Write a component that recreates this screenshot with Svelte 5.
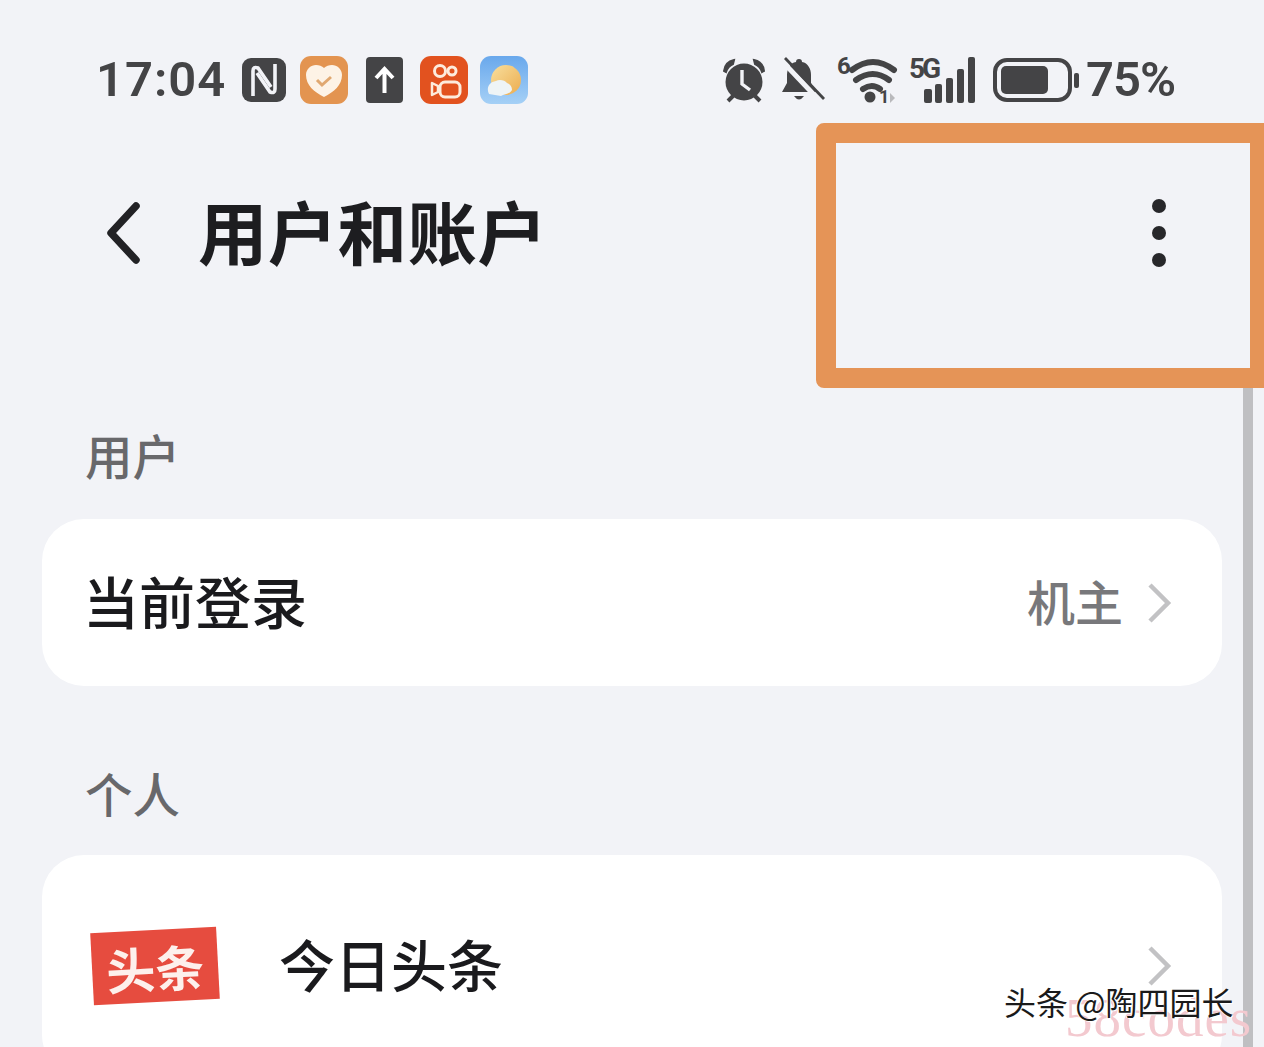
<script>
  const sections = [
    { label: '用户', rows: [{ name: '当前登录', value: '机主' }] },
    { label: '个人', rows: [{ name: '今日头条', logo: true }] }
  ];
</script>

<div class="page">
  <div class="status">
    <div class="status-left">
      <span class="time">17:04</span>
      <svg class="i-n" viewBox="0 0 44 44"><rect width="44" height="44" rx="9" fill="#444446"/><path d="M11 38V13q0-5 5-3l13 19" fill="none" stroke="#f2f3f7" stroke-width="3.600"/><path d="M33 6v25q0 5-5 3L15 15" fill="none" stroke="#f2f3f7" stroke-width="3.600"/></svg>
      <svg class="i-heart" viewBox="0 0 48 48"><rect width="48" height="48" rx="11" fill="#e39450"/><path d="M24 41C14 36 6 29 6 19c0-6 5-10 10-10 3 0 6 1 8 3 2-2 5-3 8-3 5 0 10 4 10 10 0 10-8 17-18 22z" fill="#fdf3e6"/><path d="M17 24l5 5 9-8" fill="none" stroke="#e0a870" stroke-width="3"/></svg>
      <svg class="i-up" viewBox="0 0 37 46"><rect width="37" height="46" rx="4" fill="#444446"/><path d="M18.500 36V13M10 21l8.500-9 8.500 9" fill="none" stroke="#fff" stroke-width="4"/></svg>
      <svg class="i-ks" viewBox="0 0 48 48"><rect width="48" height="48" rx="11" fill="#e2521f"/><circle cx="20" cy="15" r="5.500" fill="none" stroke="#fdebdc" stroke-width="3"/><circle cx="32" cy="15" r="4" fill="none" stroke="#fdebdc" stroke-width="3"/><rect x="20" y="26" width="20" height="15" rx="5" fill="none" stroke="#fdebdc" stroke-width="3"/><path d="M18 30l-6-3v12l6-3z" fill="none" stroke="#fdebdc" stroke-width="2.500" stroke-linejoin="round"/></svg>
      <svg class="i-weather" viewBox="0 0 48 48"><defs><linearGradient id="sky" x1="0" y1="0" x2="0" y2="1"><stop offset="0" stop-color="#69a8ec"/><stop offset="1" stop-color="#a5d0f6"/></linearGradient><linearGradient id="sun" x1="0" y1="0" x2="1" y2="1"><stop offset="0" stop-color="#f8df9e"/><stop offset="1" stop-color="#ecac4e"/></linearGradient></defs><rect width="48" height="48" rx="11" fill="url(#sky)"/><circle cx="26" cy="24" r="15" fill="url(#sun)"/><path d="M9 38c-3-6 0-12 7-13 3-2 9-1 11 2 3 1 5 3 5 7-3 5-8 4-11 6z" fill="#eef4f6"/></svg>
    </div>
    <div class="status-right">
      <svg class="i-alarm" viewBox="0 0 44 44"><circle cx="22" cy="24" r="18.500" fill="#444446"/><path d="M2 13q1-9 10-11l-1 4q-5 2-7 8zM42 13q-1-9-10-11l1 4q5 2 7 8z" fill="#444446" stroke="#444446" stroke-width="2"/><path d="M6 43l5-5M38 43l-5-5" stroke="#444446" stroke-width="4"/><path d="M20 12v14l8 6" fill="none" stroke="#f2f3f7" stroke-width="3.400"/></svg>
      <svg class="i-bell" viewBox="0 0 42 44"><path d="M17 1c2 0 3 1 3 3 6 1 9 7 9 13v8l5 9H0l5-9v-8c0-6 3-12 9-13 0-2 1-3 3-3z" fill="#444446"/><path d="M12 38h10q-5 7-10 0z" fill="#444446"/><path d="M0 3l36 38" stroke="#f2f3f7" stroke-width="5"/><path d="M3 0l39 41" stroke="#444446" stroke-width="2.800"/></svg>
      <svg class="i-wifi" viewBox="0 0 60 48"><text x="0" y="18" class="mini six">6</text><path d="M15 14q21-16 42 0M19 24q17-12 33 0M26 33q9-6 17 0" fill="none" stroke="#444446" stroke-width="6" stroke-linecap="round"/><circle cx="33" cy="41" r="5.500" fill="#444446"/><text x="42" y="47" class="mini tiny">1</text><path d="M53 37l5 5-5 5z" fill="#b9b9bc"/></svg>
      <svg class="i-5g" viewBox="0 0 66 46"><text x="0" y="21" class="mini g">5G</text><g fill="#444446"><rect x="15" y="32" width="8" height="14" rx="2"/><rect x="26" y="27" width="7" height="19" rx="2"/><rect x="37" y="21" width="7" height="25" rx="2"/><rect x="48" y="12" width="7" height="34" rx="2"/><rect x="59" y="0" width="7" height="46" rx="2"/></g></svg>
      <svg class="i-batt" viewBox="0 0 86 44"><rect x="2" y="2" width="75" height="40" rx="12" fill="none" stroke="#444446" stroke-width="4"/><rect x="8" y="8" width="47" height="28" rx="5" fill="#444446"/><rect x="81" y="15" width="5" height="15" rx="2" fill="#444446"/></svg>
      <span class="pct">75%</span>
    </div>
  </div>

  <div class="header">
    <svg class="back" viewBox="0 0 36 62"><path d="M31 4L6 31l25 27" fill="none" stroke="#222225" stroke-width="7.500" stroke-linecap="round" stroke-linejoin="round"/></svg>
    <h1>用户和账户</h1>
  </div>

  {#each sections as section}
    <div class="label">{section.label}</div>
    <div class="card">
      {#each section.rows as row}
        <div class="row" class:tall={row.logo}>
          {#if row.logo}
            <div class="logo"><span>头条</span></div>
          {/if}
          <span class="name">{row.name}</span>
          {#if row.value}<span class="value">{row.value}</span>{/if}
          <svg class="chev" viewBox="0 0 24 42"><path d="M3 3l18 18L3 39" fill="none" stroke="#c2c2c4" stroke-width="4.500"/></svg>
        </div>
      {/each}
    </div>
  {/each}

  <div class="scrollbar"></div>

  <div class="highlight"></div>
  <div class="more"><i></i><i></i><i></i></div>
  <div class="wm-site">58codes</div>
  <div class="wm-author">头条 @陶四园长</div>
</div>

<style>
  :global(body) { margin: 0; background: #f2f3f7; }
  .page {
    position: relative;
    width: 1264px;
    height: 1047px;
    overflow: hidden;
    background: #f2f3f7;
    font-family: "Noto Sans CJK SC", "Noto Sans", sans-serif;
  }
  svg { display: block; flex: none; overflow: visible; }
  .status {
    display: flex;
    justify-content: space-between;
    align-items: center;
    height: 48px;
    padding: 56px 90px 0 96px;
  }
  .status-left, .status-right { display: flex; align-items: center; }
  .time, .pct {
    font-family: Roboto, "Liberation Sans", sans-serif;
    font-weight: 600;
    color: #444446;
    line-height: 48px;
  }
  .time { font-size: 49px; letter-spacing: 1px; width: 146px; }
  .pct { font-size: 49px; margin-left: 7px; letter-spacing: -1px; width: 88px; white-space: nowrap; }
  .i-n { width: 44px; height: 44px; }
  .i-heart { width: 48px; height: 48px; margin-left: 14px; }
  .i-up { width: 37px; height: 46px; margin-left: 18px; }
  .i-ks { width: 48px; height: 48px; margin-left: 17px; }
  .i-weather { width: 48px; height: 48px; margin-left: 12px; }
  .i-alarm { width: 44px; height: 44px; }
  .i-bell { width: 42px; height: 44px; margin-left: 16px; }
  .i-wifi { width: 60px; height: 48px; margin-left: 13px; }
  .i-5g { width: 66px; height: 46px; margin-left: 12px; }
  .i-batt { width: 86px; height: 44px; margin-left: 18px; }
  .mini { font: 700 20px Roboto, sans-serif; fill: #444446; }
  .mini.six { font-size: 24px; }
  .mini.tiny { font-size: 18px; }
  .mini.g { font-size: 28px; letter-spacing: -3px; }

  .header {
    display: flex;
    align-items: center;
    height: 86px;
    margin-top: 86px;
    padding-left: 105px;
  }
  .back { width: 36px; height: 62px; margin-right: 57px; }
  h1 {
    margin: -7px 0 0;
    font-size: 69.500px;
    letter-spacing: 0.300px;
    font-weight: 700;
    line-height: 86px;
    color: #1d1d20;
  }
  .label {
    height: 46px;
    margin: 156px 0 41px 85px;
    font-size: 47.500px;
    font-weight: 500;
    line-height: 46px;
    color: #68686b;
  }
  .card + .label { margin-top: 84px; margin-bottom: 39px; }
  .card {
    margin: 0 42px;
    background: #fff;
    border-radius: 42px;
    overflow: hidden;
  }
  .row {
    display: flex;
    align-items: center;
    height: 167px;
    padding: 0 51px 0 45px;
  }
  .row.tall { height: 222px; }
  .name {
    flex: 1;
    font-size: 56px;
    font-weight: 500;
    line-height: 60px;
    margin: -6px 0 0 -4px;
    color: #1a1a1d;
  }
  .value {
    font-size: 48px;
    font-weight: 500;
    line-height: 60px;
    margin-top: -6px;
    color: #78787b;
    margin-right: 24px;
  }
  .chev { width: 24px; height: 42px; }
  .logo {
    display: flex;
    align-items: center;
    justify-content: center;
    width: 126px;
    height: 72px;
    margin: 0 65px 0 5px;
    background: #e64c3f;
    transform: rotate(-3deg);
  }
  .logo span {
    font-size: 49px;
    font-weight: 700;
    line-height: 1;
    color: #fdf0ec;
  }
  .scrollbar {
    position: absolute;
    left: 1243px;
    top: 388px;
    bottom: 0;
    width: 10px;
    background: #bfbfc2;
  }
  .highlight {
    position: absolute;
    left: 816px;
    top: 123px;
    width: 468px;
    height: 265px;
    box-sizing: border-box;
    border: 20px solid #e59457;
    border-right-width: 34px;
    border-radius: 8px;
    clip-path: inset(0 20px 0 0);
  }
  .more {
    position: absolute;
    left: 1152px;
    top: 199px;
    display: flex;
    flex-direction: column;
    gap: 13px;
  }
  .more i {
    display: block;
    width: 14px;
    height: 14px;
    border-radius: 50%;
    background: #27272a;
  }
  .wm-author {
    position: absolute;
    left: 1004px;
    top: 983px;
    font-size: 32px;
    line-height: 36px;
    white-space: nowrap;
    color: #1a1a1a;
    text-shadow: 1px 1px 0 #fff, -1px 0 0 #fff;
  }
  .wm-site {
    position: absolute;
    left: 1065px;
    top: 988px;
    font-family: "Liberation Serif", serif;
    font-size: 55px;
    line-height: 60px;
    letter-spacing: 1px;
    white-space: nowrap;
    color: #f3c9cf;
  }
</style>
